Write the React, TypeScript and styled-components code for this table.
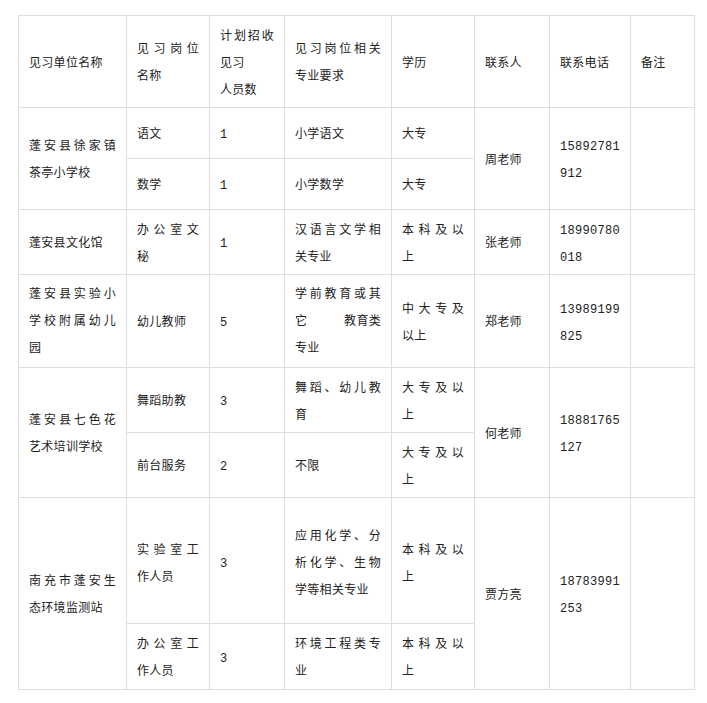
import React, { FC, ReactNode } from "react";
import styled, { createGlobalStyle } from "styled-components";

const GlobalStyle = createGlobalStyle`
    html, body {
        margin: 0;
        padding: 0;
        background: #ffffff;
    }
    body {
        font-family: "Liberation Mono", "Noto Sans CJK SC", monospace;
        font-size: 12px;
        color: #222222;
    }
`;

const Page = styled.div`
    padding: 15px 0 0 18px;
`;

const Table = styled.table`
    border-collapse: collapse;
    table-layout: fixed;
    width: 677px;
    letter-spacing: 0.3px;
`;

const Row = styled.tr<{ $h: number }>`
    height: ${(p) => p.$h}px;
`;

// $shift moves the text down (positive) or up (negative) inside its cell
const Td = styled.td<{ $shift: number }>`
    border: 1px solid #dddddd;
    padding: ${(p) => 5 + Math.max(p.$shift, 0)}px 10px ${(p) => Math.max(-p.$shift, 0)}px;
    vertical-align: middle;
    line-height: 27px;
    overflow: hidden;
`;

const Line = styled.div`
    white-space: nowrap;
`;

// a line that the original page stretched to the full cell width
const Spread = styled.div`
    white-space: nowrap;
    text-align: justify;
    text-align-last: justify;
`;

// a stretched line whose gap sits only at its space
const Split = styled.div`
    display: flex;
    justify-content: space-between;
    white-space: nowrap;
`;

const widths = [108, 83, 75, 107, 83, 75, 81, 64];

type CellProps = { rows?: number; shift?: number; children?: ReactNode };

const Cell: FC<CellProps> = ({ rows, shift = 0, children }) => (
    <Td rowSpan={rows} $shift={shift}>
        {children}
    </Td>
);

const App: FC = () => {
    return (
        <Page>
            <GlobalStyle />
            <Table>
                <colgroup>
                    {widths.map((w, i) => (
                        <col key={i} style={{ width: w }} />
                    ))}
                </colgroup>
                <tbody>
                    <Row $h={92}>
                        <Cell><Line>见习单位名称</Line></Cell>
                        <Cell><Spread>见习岗位</Spread><Line>名称</Line></Cell>
                        <Cell><Spread>计划招收</Spread><Line>见习</Line><Line>人员数</Line></Cell>
                        <Cell><Spread>见习岗位相关</Spread><Line>专业要求</Line></Cell>
                        <Cell><Line>学历</Line></Cell>
                        <Cell><Line>联系人</Line></Cell>
                        <Cell><Line>联系电话</Line></Cell>
                        <Cell><Line>备注</Line></Cell>
                    </Row>

                    <Row $h={51}>
                        <Cell rows={2}><Spread>蓬安县徐家镇</Spread><Line>茶亭小学校</Line></Cell>
                        <Cell><Line>语文</Line></Cell>
                        <Cell><Line>1</Line></Cell>
                        <Cell><Line>小学语文</Line></Cell>
                        <Cell><Line>大专</Line></Cell>
                        <Cell rows={2}><Line>周老师</Line></Cell>
                        <Cell rows={2}><Line>15892781</Line><Line>912</Line></Cell>
                        <Cell rows={2} />
                    </Row>
                    <Row $h={51}>
                        <Cell><Line>数学</Line></Cell>
                        <Cell><Line>1</Line></Cell>
                        <Cell><Line>小学数学</Line></Cell>
                        <Cell><Line>大专</Line></Cell>
                    </Row>

                    <Row $h={65}>
                        <Cell><Line>蓬安县文化馆</Line></Cell>
                        <Cell><Spread>办公室文</Spread><Line>秘</Line></Cell>
                        <Cell><Line>1</Line></Cell>
                        <Cell><Spread>汉语言文学相</Spread><Line>关专业</Line></Cell>
                        <Cell><Spread>本科及以</Spread><Line>上</Line></Cell>
                        <Cell><Line>张老师</Line></Cell>
                        <Cell><Line>18990780</Line><Line>018</Line></Cell>
                        <Cell />
                    </Row>

                    <Row $h={93}>
                        <Cell shift={-2}><Spread>蓬安县实验小</Spread><Spread>学校附属幼儿</Spread><Line>园</Line></Cell>
                        <Cell><Line>幼儿教师</Line></Cell>
                        <Cell><Line>5</Line></Cell>
                        <Cell shift={-2}>
                            <Spread>学前教育或其</Spread>
                            <Split><span>它</span><span>教育类</span></Split>
                            <Line>专业</Line>
                        </Cell>
                        <Cell><Spread>中大专及</Spread><Line>以上</Line></Cell>
                        <Cell><Line>郑老师</Line></Cell>
                        <Cell><Line>13989199</Line><Line>825</Line></Cell>
                        <Cell />
                    </Row>

                    <Row $h={65}>
                        <Cell rows={2}><Spread>蓬安县七色花</Spread><Line>艺术培训学校</Line></Cell>
                        <Cell><Line>舞蹈助教</Line></Cell>
                        <Cell><Line>3</Line></Cell>
                        <Cell><Spread>舞蹈、幼儿教</Spread><Line>育</Line></Cell>
                        <Cell><Spread>大专及以</Spread><Line>上</Line></Cell>
                        <Cell rows={2}><Line>何老师</Line></Cell>
                        <Cell rows={2}><Line>18881765</Line><Line>127</Line></Cell>
                        <Cell rows={2} />
                    </Row>
                    <Row $h={65}>
                        <Cell><Line>前台服务</Line></Cell>
                        <Cell><Line>2</Line></Cell>
                        <Cell><Line>不限</Line></Cell>
                        <Cell><Spread>大专及以</Spread><Line>上</Line></Cell>
                    </Row>

                    <Row $h={126}>
                        <Cell rows={2}><Spread>南充市蓬安生</Spread><Line>态环境监测站</Line></Cell>
                        <Cell shift={3}><Spread>实验室工</Spread><Line>作人员</Line></Cell>
                        <Cell shift={3}><Line>3</Line></Cell>
                        <Cell shift={3}>
                            <Spread>应用化学、分</Spread>
                            <Spread>析化学、生物</Spread>
                            <Line>学等相关专业</Line>
                        </Cell>
                        <Cell shift={3}><Spread>本科及以</Spread><Line>上</Line></Cell>
                        <Cell rows={2}><Line>贾方亮</Line></Cell>
                        <Cell rows={2}><Line>18783991</Line><Line>253</Line></Cell>
                        <Cell rows={2} />
                    </Row>
                    <Row $h={66}>
                        <Cell><Spread>办公室工</Spread><Line>作人员</Line></Cell>
                        <Cell><Line>3</Line></Cell>
                        <Cell><Spread>环境工程类专</Spread><Line>业</Line></Cell>
                        <Cell><Spread>本科及以</Spread><Line>上</Line></Cell>
                    </Row>
                </tbody>
            </Table>
        </Page>
    );
};

export default App;
